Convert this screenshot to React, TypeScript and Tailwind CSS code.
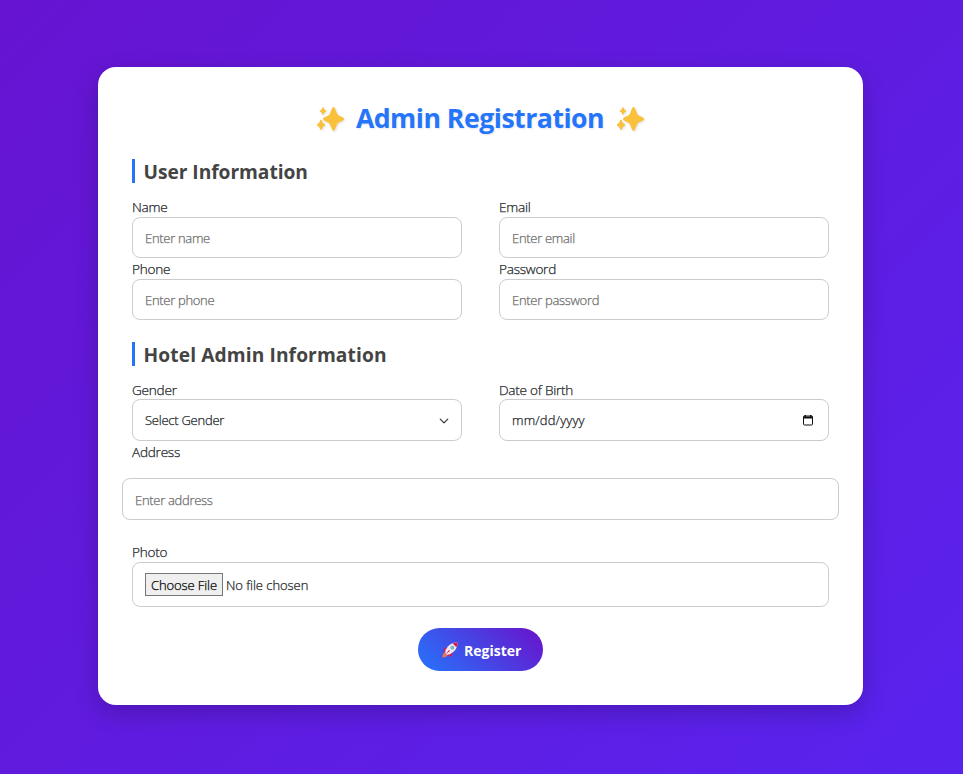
import type { ReactNode } from "react";

function Sparkles() {
  return (
    <svg className="h-[28px] w-[29px] drop-shadow-[1px_1px_1px_rgba(0,0,0,0.12)]" viewBox="0 0 29 28" fill="#fac23c">
      <path d="M17.5 2C18.7 2 19.2 4 20.6 7.4C21.6 9.8 22.2 10.3 24.4 11.2C27.2 12.4 28 13 28 14C28 15 27.2 15.6 24.4 16.8C22.2 17.7 21.6 18.2 20.6 20.6C19.2 24 18.7 26 17.5 26C16.3 26 15.8 24 14.4 20.6C13.4 18.2 12.8 17.7 10.6 16.8C7.8 15.6 7 15 7 14C7 13 7.8 12.4 10.6 11.2C12.8 10.3 13.4 9.8 14.4 7.4C15.8 4 16.3 2 17.5 2Z" />
      <path d="M7 2C7.8 2 7.8 4.8 9.6 5.2C10.6 5.6 10.6 6.4 9.6 6.8C7.8 7.2 7.8 10 7 10C6.2 10 6.2 7.2 4.4 6.8C3.4 6.4 3.4 5.6 4.4 5.2C6.2 4.8 6.2 2 7 2Z" />
      <path d="M5 14.5C6 14.5 6 17.8 8.2 18.8C9.4 19.4 9.4 20.4 8.2 20.9C6 21.7 6 25 5 25C4 25 4 21.7 1.8 20.9C.6 20.4.6 19.4 1.8 18.8C4 17.8 4 14.5 5 14.5Z" />
    </svg>
  );
}

function Rocket() {
  return (
    <svg className="h-4 w-4" viewBox="0 0 16 16">
      <path d="M6.5 4.8L2.8 6.2L1 9.8L4.4 9.2ZM11 9.5L9.8 13.2L6.2 15L6.8 11.5Z" fill="#df1948" />
      <path d="M3.2 10.2C1.2 10.7.4 12.6.5 15.4C3.2 15.5 5 14.7 5.7 12.7Z" fill="#f3734d" />
      <path d="M15.4.6C11 .3 6.5 2.4 3.6 8.1L3.2 10.8L5.1 12.7L7.8 12.3C13.5 9.4 15.7 5 15.4.6Z" fill="#efeaf3" />
      <path d="M15.4.6C13.8.5 12.2.8 10.7 1.6L14.4 5.3C15.2 3.8 15.5 2.2 15.4.6Z" fill="#dc174a" />
      <circle cx="10.3" cy="5.7" r="1.9" fill="#6f98aa" />
      <circle cx="10.3" cy="5.7" r="1.2" fill="#83cbd8" />
      <path d="M7 8L3.5 12.3L8 9Z" fill="#df1948" />
    </svg>
  );
}

function Heading({ children, className }: { children: ReactNode; className: string }) {
  return (
    <h2 className={`h-6 border-l-[3px] border-[#2575fc] pl-[8.5px] text-[19.2px] leading-[26px] font-bold whitespace-nowrap text-[#444] ${className}`}>
      {children}
    </h2>
  );
}

function Label({ children, className = "" }: { children: ReactNode; className?: string }) {
  return <label className={`block h-5 text-[13.6px] leading-[19px] font-light tracking-[-0.25px] whitespace-nowrap text-[#212529] [-webkit-text-stroke:0.25px] ${className}`}>{children}</label>;
}

const box = "w-full rounded-[8px] border border-[#ccc] bg-white px-3 text-[13px] font-light whitespace-nowrap [-webkit-text-stroke:0.25px]";
const field = "tracking-[-0.3px] placeholder:text-[#6c6c6c]";

export default function App() {
  return (
    <main className="flex h-[774px] w-full justify-center bg-[linear-gradient(135deg,#6614d1,#5923ee)] pt-[67px] pr-[2px] font-['Open_Sans','Noto_Sans',sans-serif]">
      <form className="h-[638px] w-[765px] rounded-[18px] bg-white px-[34px] pt-[37px] shadow-[0_8px_25px_rgba(0,0,0,0.2)]">
        <h1 className="flex h-[30px] items-center justify-center text-[26.6px] font-bold whitespace-nowrap text-[#2575fc]">
          <Sparkles />
          <span className="mr-[12px] ml-[11px] tracking-[-0.47px] [text-shadow:1px_1px_2px_rgba(0,0,0,0.1)]">Admin Registration</span>
          <Sparkles />
        </h1>

        <Heading className="mt-[25px] tracking-[-0.05px]">User Information</Heading>
        <div className="mt-[14px] grid grid-cols-2 gap-x-[37px]">
          <div>
            <Label>Name</Label>
            <input className={`${box} ${field} h-[41px]`} placeholder="Enter name" />
          </div>
          <div>
            <Label>Email</Label>
            <input className={`${box} ${field} h-[41px]`} placeholder="Enter email" />
          </div>
          <div className="mt-px">
            <Label>Phone</Label>
            <input className={`${box} ${field} h-[41px]`} placeholder="Enter phone" />
          </div>
          <div className="mt-px">
            <Label>Password</Label>
            <input className={`${box} ${field} h-[41px]`} placeholder="Enter password" />
          </div>
        </div>

        <Heading className="mt-[22px] tracking-[0.1px]">Hotel Admin Information</Heading>
        <div className="mt-[13px] grid grid-cols-2 gap-x-[37px]">
          <div>
            <Label className="pt-px">Gender</Label>
            <div className={`${box} flex h-[42px] items-center justify-between pt-px tracking-[-0.25px] text-[#212529]`}>
              <span>Select Gender</span>
              <svg className="h-[10px] w-[10px]" viewBox="0 0 16 16" fill="none" stroke="#343a40" strokeWidth="2" strokeLinecap="round" strokeLinejoin="round">
                <path d="M2 5l6 6 6-6" />
              </svg>
            </div>
          </div>
          <div>
            <Label className="pt-px">Date of Birth</Label>
            <div className={`${box} flex h-[42px] items-center justify-between pt-px tracking-[0.15px] text-[#212529]`}>
              <span>mm/dd/yyyy</span>
              <svg className="mr-[3px] mb-[2px] h-[12px] w-[10px]" viewBox="0 0 10 12">
                <path d="M1.5 2H8.5Q9.5 2 9.5 3V10Q9.5 11 8.5 11H1.5Q.5 11 .5 10V3Q.5 2 1.5 2Z" fill="none" stroke="#111" />
                <path d="M.5 2.5H9.5V4.5H.5ZM1.5 1H3V3H1.5ZM7 1H8.5V3H7Z" fill="#111" />
              </svg>
            </div>
          </div>
        </div>
        <Label className="mt-px">Address</Label>
        <div className="-mx-[10px] mt-4">
          <input className={`${box} ${field} block h-[42px] pt-[2px]`} placeholder="Enter address" />
        </div>
        <Label className="mt-[22px]">Photo</Label>
        <div className={`${box} flex h-[45px] items-center tracking-[-0.05px] text-[#212529]`}>
          <button type="button" className="h-[23px] w-[78px] border border-[#767676] bg-[#efefef] pt-px text-[13px] leading-[20px] tracking-[-0.1px] text-black">Choose File</button>
          <span className="ml-[3px] pt-[2px]">No file chosen</span>
        </div>
        <button type="button" className="mx-auto mt-[21px] flex h-[43px] w-[125px] items-center rounded-full bg-[linear-gradient(45deg,#2575fc,#6a11cb)] pt-px pl-6 text-[14px] font-bold text-white">
          <Rocket />
          <span className="ml-[6px] whitespace-nowrap">Register</span>
        </button>
      </form>
    </main>
  );
}
